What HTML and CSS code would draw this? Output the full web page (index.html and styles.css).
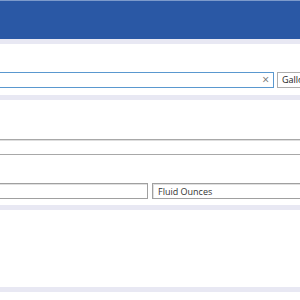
FILE: index.html
```html
<!DOCTYPE html>
<html>
<head>
<meta charset="utf-8">
<link rel="stylesheet" href="styles.css">
</head>
<body>
<div class="page">
  <header class="header"></header>
  <div class="band"></div>
  <section class="sec sec1">
    <div class="search-row">
      <div class="search"><span class="clear">×</span></div>
      <div class="btn">Gallons</div>
    </div>
  </section>
  <div class="band"></div>
  <section class="sec sec2">
    <div class="wide-box"></div>
    <div class="pair">
      <div class="box"></div>
      <div class="box"><span class="label">Fluid Ounces</span></div>
    </div>
  </section>
  <div class="band"></div>
  <section class="sec sec3"></section>
  <div class="band"></div>
</div>
</body>
</html>
```
FILE: styles.css
```css
html, body {
  margin: 0;
  padding: 0;
  background: #ffffff;
  overflow: hidden;
  font-family: "Open Sans", "Noto Sans", sans-serif;
}
.page {
  width: 300px;
}
.header {
  height: 38px;
  background: #2a58a5;
  border-top: 1px solid #7c9acb;
}
.band {
  height: 5px;
  background: #e8e8f3;
}
.sec {
  background: #ffffff;
}
.sec1 {
  height: 51px;
  padding-top: 28px;
  box-sizing: border-box;
}
.search-row {
  display: flex;
  gap: 3px;
  margin-left: -10px;
}
.search {
  flex: 0 0 284px;
  height: 16px;
  box-sizing: border-box;
  border: 1px solid #5a98cf;
  display: flex;
  justify-content: flex-end;
  align-items: center;
  padding-right: 4px;
}
.clear {
  color: #707070;
  font-size: 12px;
  line-height: 1;
}
.btn {
  flex: 0 0 auto;
  height: 16px;
  box-sizing: border-box;
  border: 1px solid #adadad;
  background: #ffffff;
  font-size: 9px;
  line-height: 14px;
  padding: 0 4px;
  color: #222;
}
.sec2 {
  height: 105px;
  padding-top: 39px;
  box-sizing: border-box;
}
.wide-box {
  height: 16px;
  margin: 0 -10px;
  box-sizing: border-box;
  border: 1px solid #a8a8a8;
  box-shadow: inset 0 1px 0 #dedede;
}
.pair {
  display: flex;
  gap: 4px;
  margin-top: 28px;
  margin-left: -10px;
}
.box {
  height: 16px;
  box-sizing: border-box;
  border: 1px solid #a0a0a0;
  box-shadow: inset 1px 1px 0 #e0e0e0;
  width: 158px;
  flex: 0 0 auto;
  display: flex;
  align-items: center;
}
.box + .box {
  width: 170px;
}
.label {
  font-size: 9px;
  color: #333;
  padding-left: 5px;
}
.sec3 {
  height: 77px;
}
```
